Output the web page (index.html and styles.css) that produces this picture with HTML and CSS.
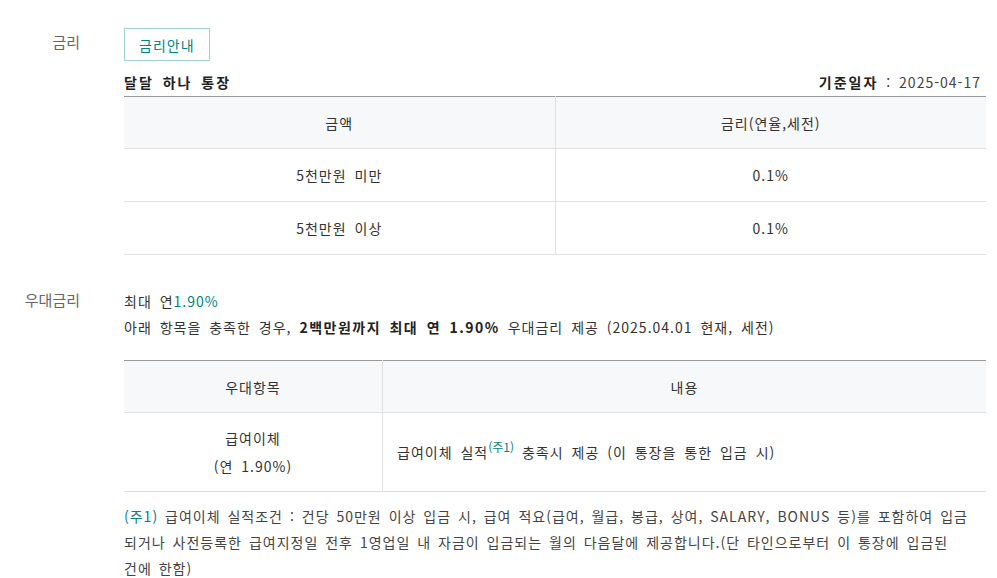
FILE: index.html
```html
<!DOCTYPE html>
<html lang="ko">
<head>
    <meta charset="utf-8">
    <title>달달 하나 통장 금리</title>
    <link rel="stylesheet" href="styles.css">
</head>
<body>
    <div class="rate-page">
        <div class="info-row first">
            <div class="info-label">금리</div>
            <div class="info-body">
                <button class="btn-rate">금리안내</button>
                <div class="table-title">
                    <strong>달달 하나 통장</strong>
                    <span class="base-date"><b>기준일자</b> : 2025-04-17</span>
                </div>
                <table class="rate-table">
                    <thead>
                        <tr><th>금액</th><th>금리(연율,세전)</th></tr>
                    </thead>
                    <tbody>
                        <tr><td>5천만원 미만</td><td>0.1%</td></tr>
                        <tr><td>5천만원 이상</td><td>0.1%</td></tr>
                    </tbody>
                </table>
            </div>
        </div>

        <div class="info-row second">
            <div class="info-label">우대금리</div>
            <div class="info-body">
                <p class="max-rate">최대 연<span class="point">1.90%</span></p>
                <p class="desc">아래 항목을 충족한 경우, <b>2백만원까지 최대 연 1.90%</b> 우대금리 제공 (2025.04.01 현재, 세전)</p>
                <table class="rate-table pref-table">
                    <thead>
                        <tr><th class="col-item">우대항목</th><th>내용</th></tr>
                    </thead>
                    <tbody>
                        <tr>
                            <td class="col-item">급여이체<br>(연 1.90%)</td>
                            <td class="left">급여이체 실적<sup class="point">(주1)</sup> 충족시 제공 (이 통장을 통한 입금 시)</td>
                        </tr>
                    </tbody>
                </table>
                <p class="note"><span class="point">(주1)</span> 급여이체 실적조건 : 건당 50만원 이상 입금 시, 급여 적요(급여, 월급, 봉급, 상여, SALARY, BONUS 등)를 포함하여 입금되거나 사전등록한 급여지정일 전후 1영업일 내 자금이 입금되는 월의 다음달에 제공합니다.(단 타인으로부터 이 통장에 입금된 <span class="nowrap">건에 한함)</span></p>
            </div>
        </div>
    </div>
</body>
</html>
```

FILE: styles.css
```css
html, body {
    margin: 0;
    padding: 0;
    background: #fff;
}
body {
    font-family: "Noto Sans CJK KR", "Noto Sans", sans-serif;
    font-size: 14px;
    color: #333;
    letter-spacing: 1px;
    word-spacing: 3px;
}
.rate-page {
    padding: 0 11px 0 0;
}
.info-row {
    display: flex;
    gap: 44px;
}
.info-row.first {
    padding-top: 28px;
}
.info-row.second {
    padding-top: 33px;
}
.info-label {
    width: 80px;
    flex-shrink: 0;
    text-align: right;
    font-size: 15px;
    color: #666;
    line-height: 24px;
    letter-spacing: 0;
}
.info-row.first .info-label {
    padding-top: 2px;
}
.info-body {
    flex: 1;
}
.btn-rate {
    display: block;
    height: 33px;
    padding: 0 14px;
    background: #fff;
    border: 1px solid #9fd3d2;
    color: #00847e;
    font-family: inherit;
    font-size: 14px;
    letter-spacing: 1px;
    cursor: pointer;
}
.table-title {
    display: flex;
    justify-content: space-between;
    align-items: center;
    height: 20px;
    margin-top: 11px;
    padding: 0 5px 4px 0;
    font-size: 14px;
}
.table-title strong {
    font-weight: bold;
    color: #222;
    letter-spacing: 2px;
}
.base-date {
    color: #444;
}
.base-date b {
    color: #222;
    letter-spacing: 2px;
}
.rate-table {
    width: 100%;
    border-collapse: collapse;
    border-top: 1px solid #999;
    table-layout: fixed;
}
.rate-table th,
.rate-table td {
    font-weight: normal;
    text-align: center;
    border-bottom: 1px solid #e1e1e1;
    color: #333;
    line-height: 20px;
    padding: 0;
}
.rate-table th {
    background: #f7f8fa;
    height: 51px;
}
.rate-table td {
    height: 52px;
}
.rate-table th + th,
.rate-table td + td {
    border-left: 1px solid #e1e1e1;
}
.max-rate,
.desc {
    margin: 0;
    line-height: 26px;
}
.desc {
    margin-bottom: 20px;
}
.desc b {
    color: #222;
    letter-spacing: 1.5px;
}
.point {
    color: #00847e;
}
.pref-table .col-item {
    width: 258px;
}
.pref-table td {
    height: 78px;
    line-height: 28px;
}
.pref-table td.left {
    text-align: left;
    padding-left: 14px;
}
.pref-table sup {
    font-size: 12px;
    line-height: 0;
    vertical-align: 6px;
    letter-spacing: 0;
}
.note {
    margin: 0;
    padding: 11px 12px 0 0;
    line-height: 26px;
    color: #444;
    word-spacing: 2px;
}
.nowrap {
    white-space: nowrap;
}
```
